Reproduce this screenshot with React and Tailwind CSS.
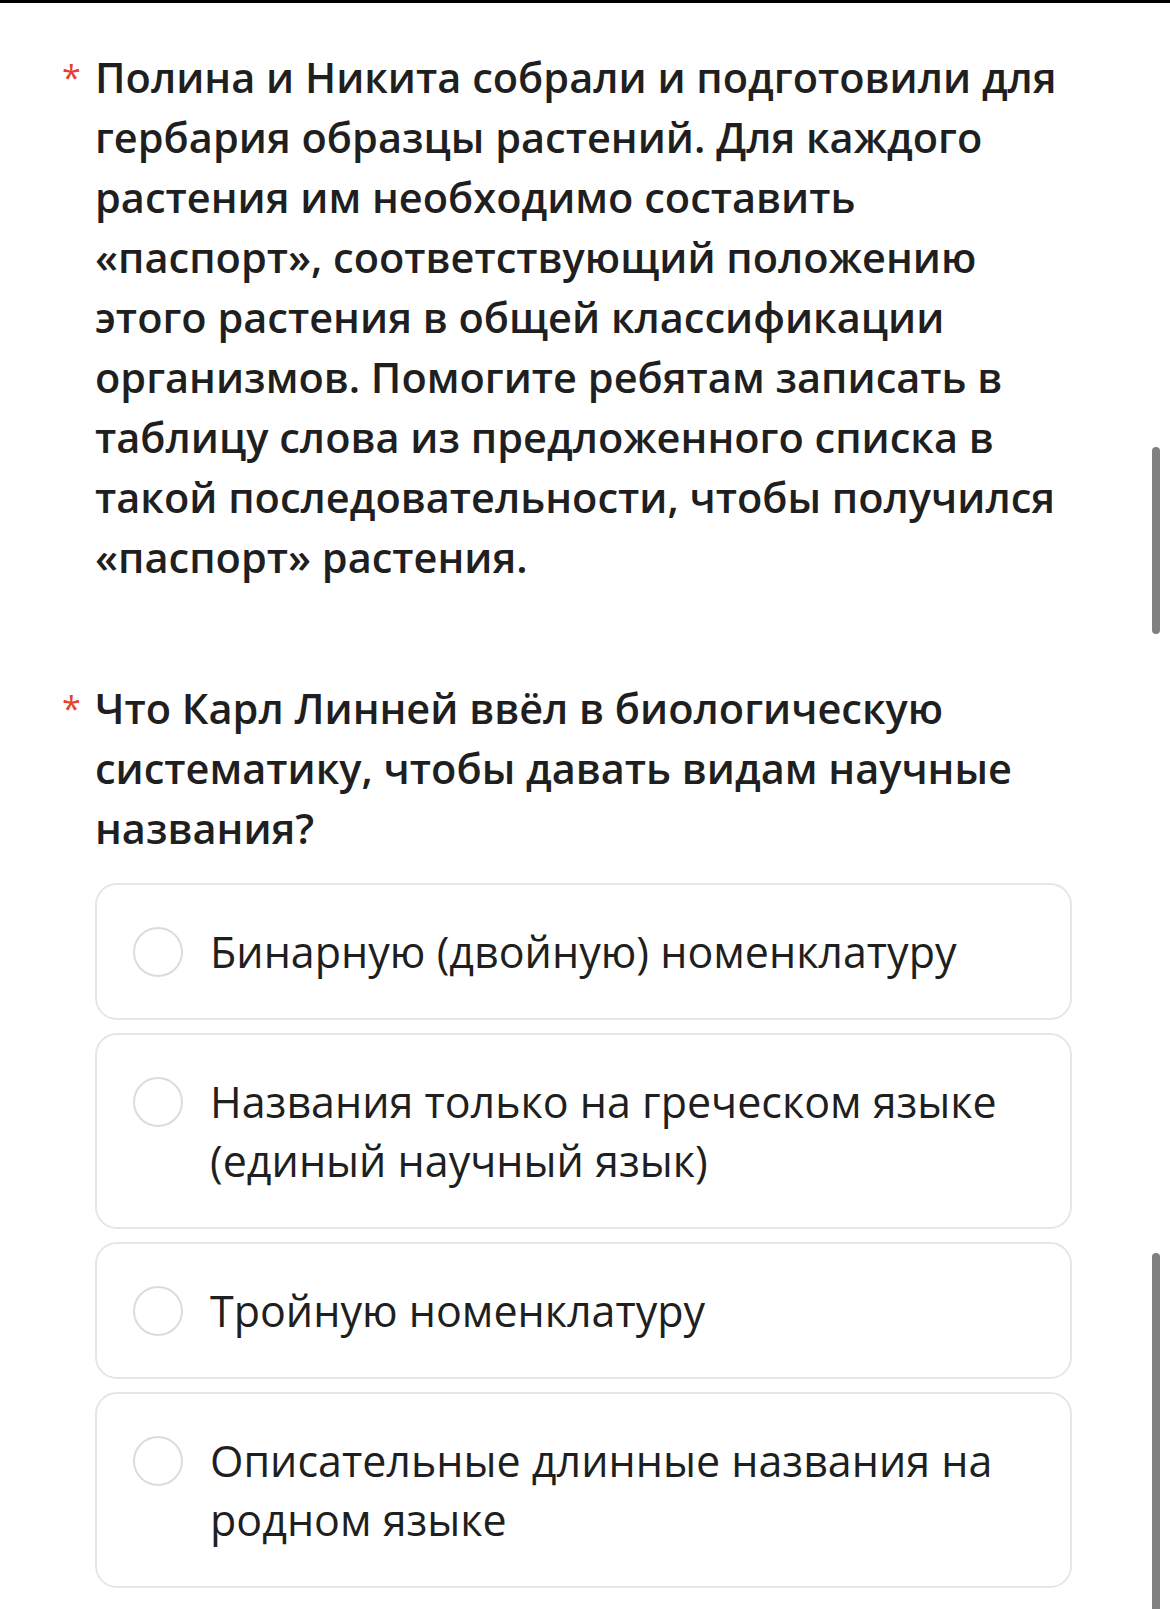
import React from 'react';

const options = [
  'Бинарную (двойную) номенклатуру',
  'Названия только на греческом языке (единый научный язык)',
  'Тройную номенклатуру',
  'Описательные длинные названия на родном языке',
];

function Question({ children }) {
  return (
    <div className="flex">
      <span className="w-[33px] shrink-0 pt-[13px] text-[34px] leading-none text-[#e5412d]">*</span>
      <p className="w-[975px] text-[41.5px] font-semibold leading-[60px] text-[#1f1f1f]">{children}</p>
    </div>
  );
}

function Option({ label }) {
  return (
    <label className="flex items-start gap-[27px] rounded-[22px] border-2 border-[#e6e6e6] bg-white py-[37px] pl-[36px] pr-[36px]">
      <span className="mt-[5px] h-[50px] w-[50px] shrink-0 rounded-full border-2 border-[#dcdcdc] bg-white" />
      <span className="text-[43px] leading-[59px] text-[#1f1f1f]">{label}</span>
    </label>
  );
}

export default function App() {
  return (
    <div className="relative min-h-[1609px] overflow-hidden bg-white" style={{ fontFamily: '"Open Sans", "Noto Sans", sans-serif' }}>
      {/* top edge */}
      <div className="h-[3px] bg-black" />

      {/* scroll indicators */}
      <div className="absolute left-[1152px] top-[447px] h-[187px] w-[8px] rounded-full bg-[#808080]" />
      <div className="absolute left-[1152px] top-[1253px] h-[400px] w-[8px] rounded-full bg-[#808080]" />

      <div className="pl-[62px] pt-[44px]">
        <Question>
          Полина и Никита собрали и подготовили для гербария образцы растений. Для каждого
          растения им необходимо составить «паспорт», соответствующий положению этого растения
          в общей классификации организмов. Помогите ребятам записать в таблицу слова из
          предложенного списка в такой последовательности, чтобы получился «паспорт» растения.
        </Question>

        <div className="mt-[91px]">
          <Question>
            Что Карл Линней ввёл в биологическую систематику, чтобы давать видам научные названия?
          </Question>
        </div>

        <div className="ml-[33px] mt-[25px] flex w-[977px] flex-col gap-[13px]">
          {options.map((o) => (
            <Option key={o} label={o} />
          ))}
        </div>
      </div>
    </div>
  );
}
